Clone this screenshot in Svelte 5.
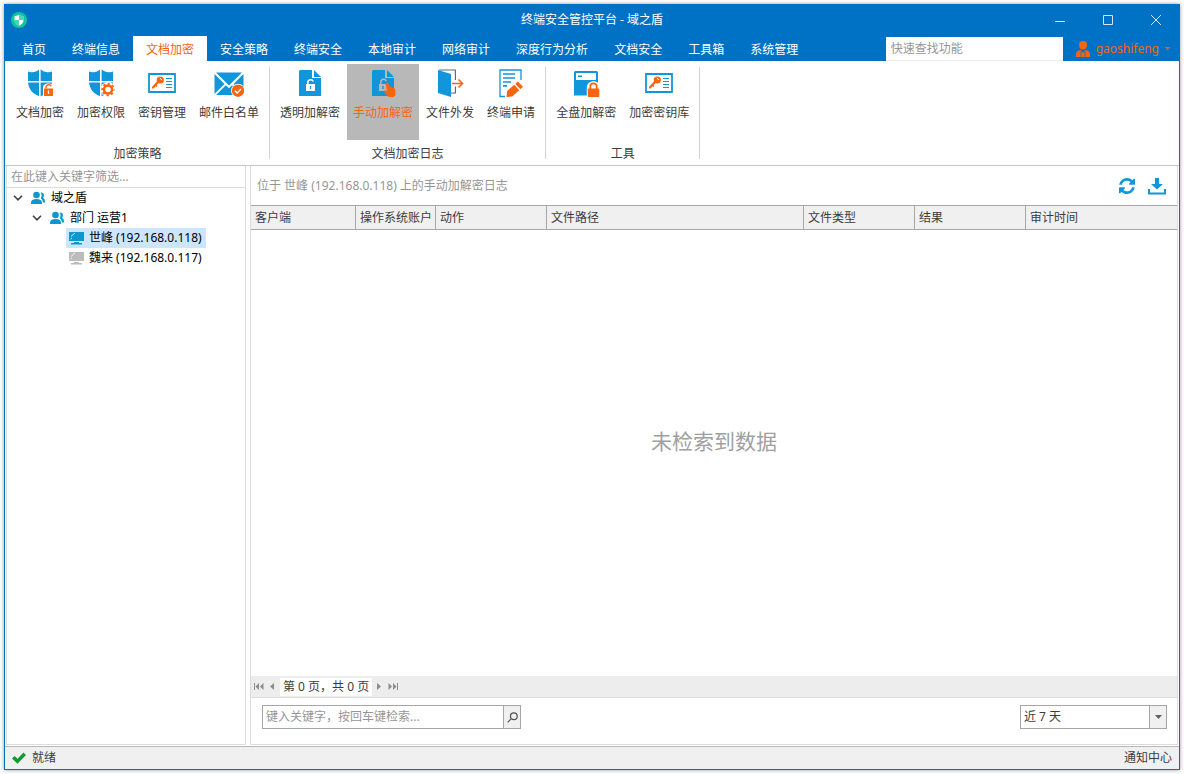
<script lang="ts">
	type RibbonItem = { icon: string; label: string };
	type RibbonGroup = { label: string; items: RibbonItem[] };
	type TreeNode = { label: string; level: number; kind: 'folder' | 'online' | 'offline' };

	const TABS = [
		'首页',
		'终端信息',
		'文档加密',
		'安全策略',
		'终端安全',
		'本地审计',
		'网络审计',
		'深度行为分析',
		'文档安全',
		'工具箱',
		'系统管理'
	];

	const GROUPS: RibbonGroup[] = [
		{
			label: '加密策略',
			items: [
				{ icon: 'shield-lock', label: '文档加密' },
				{ icon: 'shield-gear', label: '加密权限' },
				{ icon: 'key-card', label: '密钥管理' },
				{ icon: 'mail', label: '邮件白名单' }
			]
		},
		{
			label: '文档加密日志',
			items: [
				{ icon: 'doc-lock', label: '透明加解密' },
				{ icon: 'doc-hand', label: '手动加解密' },
				{ icon: 'door', label: '文件外发' },
				{ icon: 'doc-edit', label: '终端申请' }
			]
		},
		{
			label: '工具',
			items: [
				{ icon: 'disk', label: '全盘加解密' },
				{ icon: 'key-card', label: '加密密钥库' }
			]
		}
	];

	const NODES: TreeNode[] = [
		{ label: '域之盾', level: 0, kind: 'folder' },
		{ label: '部门 运营1', level: 1, kind: 'folder' },
		{ label: '世峰 (192.168.0.118)', level: 2, kind: 'online' },
		{ label: '魏来 (192.168.0.117)', level: 2, kind: 'offline' }
	];

	const COLUMNS = [
		{ label: '客户端', cls: 'w-client' },
		{ label: '操作系统账户', cls: 'w-account' },
		{ label: '动作', cls: 'w-mid' },
		{ label: '文件路径', cls: '' },
		{ label: '文件类型', cls: 'w-mid' },
		{ label: '结果', cls: 'w-mid' },
		{ label: '审计时间', cls: 'w-time' }
	];

	const RANGES = ['近 7 天', '近 30 天', '近 90 天'];

	let activeTab = $state('文档加密');
	let activeItem = $state('手动加解密');
	let activeNode = $state('世峰 (192.168.0.118)');
	let quickFind = $state('');
	let treeFilter = $state('');
	let keyword = $state('');
	let range = $state(RANGES[0]);
</script>

{#snippet shield()}
	<path fill="#1296db" d="M4 4.5c1.6.8 3.6 1 5.600.6C12 4.600 14 3.600 16 2c2 1.600 4 2.600 6.400 3.100 2 .4 4 .2 5.600-.6V14c0 8-5 13.200-12 15.500C9 27.200 4 22 4 14z" />
	<path stroke="#fff" stroke-width="1.6" d="M15.800 1v29M3 14.800h26" />
{/snippet}

{#snippet docBody()}
	<path fill="#1296db" d="M5 4.500A1.500 1.500 0 0 1 6.500 3H18v8h9v18H5z" />
	<path fill="#1296db" d="M20 3l7 7h-7z" />
{/snippet}

{#snippet ribbonIcon(name: string)}
	<svg class="ribbon-icon" viewBox="0 0 32 32" fill="none" aria-hidden="true">
		{#if name === 'shield-lock'}
			{@render shield()}
			<path fill="#fff" d="M19 20.500c0-5.500 10.500-5.500 10.500 0V30H19z" />
			<path stroke="#f9640f" stroke-width="1.500" d="M22 21.500v-1.300a2.800 2.800 0 0 1 5.200-1" />
			<path fill="#f9640f" d="M20 21.500h9V29h-9z" />
			<path stroke="#fff" stroke-width="1.300" d="M24.500 23.500v3.500" />
		{:else if name === 'shield-gear'}
			{@render shield()}
			<circle cx="23" cy="22.500" r="7.500" fill="#fff" />
			<circle cx="23" cy="22.500" r="4" stroke="#f9640f" stroke-width="2.400" />
			<circle cx="23" cy="22.500" r="5.700" stroke="#f9640f" stroke-width="2" stroke-dasharray="2.200 2.280" stroke-dashoffset="1.100" />
		{:else if name === 'key-card'}
			<path stroke="#1296db" stroke-width="1.800" d="M3 7h26v18H3z" />
			<path stroke="#f9640f" stroke-width="2.200" stroke-linecap="round" d="M12 15l-5 5.500" />
			<path stroke="#f9640f" stroke-width="1.500" d="M9.500 18l1.300 1.500" />
			<circle cx="14.300" cy="13" r="3.600" fill="#f9640f" />
			<path stroke="#fff" stroke-width="1" d="M13.800 11l2.200 2" />
			<path stroke="#1296db" stroke-width="1.100" d="M20 11.500h6M20 14.500h6M20 17.500h6M20 20.500h6" />
		{:else if name === 'mail'}
			<path fill="#1296db" d="M3 5.500h26L16 18.500z" />
			<path fill="#1296db" d="M1.500 7l10 10-10 10zM30.500 7l-10 10 10 10zM3 28l9.800-9.800 3.200 3 3.200-3L29 28z" />
			<circle cx="25" cy="23.700" r="7" fill="#fff" />
			<circle cx="25" cy="23.700" r="6.200" fill="#f9640f" />
			<path stroke="#fff" stroke-width="1.400" d="M22 23.700l2.200 2.200 3.800-3.800" />
		{:else if name === 'doc-lock'}
			{@render docBody()}
			<path stroke="#fff" stroke-width="1.500" d="M13.800 17v-1.500a2.800 2.800 0 0 1 5.400-1" />
			<path fill="#fff" d="M12 17h9v7h-9z" />
			<path stroke="#1296db" stroke-width="1.200" d="M16.500 19v3" />
		{:else if name === 'doc-hand'}
			{@render docBody()}
			<path stroke="#b8b8b8" stroke-width="1.500" d="M13.800 17v-2a2.800 2.800 0 0 1 5.400-1" />
			<path fill="#b8b8b8" d="M12 17h9v7h-9z" />
			<path stroke="#1296db" stroke-width="1.400" d="M16 19v3" />
			<path fill="#f9640f" d="M18.500 16.200c.8-1 2.400-.7 2.900.4l1.200 3c.8-.3 1.600 0 2 .7.8-.2 1.500.2 1.800.9 1.200-.1 1.900.6 1.900 1.900v4c0 1.800-1 2.900-2.500 2.900h-2.600c-1.400 0-2.300-.5-3-1.500L17.300 25c-.6-1.100.6-2.200 1.800-1.500l.9.500z" />
		{:else if name === 'door'}
			<path stroke="#5c6b80" stroke-width="1.200" d="M5 3h16.400v10M21.400 19.500V26H17" />
			<path fill="#1296db" d="M4 3l13 4v23L4 26z" />
			<path stroke="#f9640f" stroke-width="1.600" d="M18 16.500h10M24.500 12.500l4 4-4 4" />
		{:else if name === 'doc-edit'}
			<path stroke="#1296db" stroke-width="1.300" d="M26 13V3H5v26.500h5" />
			<path stroke="#1296db" stroke-width="1.700" d="M8 7h12M8 11h12M8 15h8M8 18.800h4" />
			<path fill="#f9640f" d="M11.500 30l.7-6 7-6.300 5 5.500-7 6.300zM20.300 16.700l2.500-2.200 5.200 5.200-2.700 2.500z" />
		{:else if name === 'disk'}
			<path fill="#1296db" d="M4 5.500A1.500 1.500 0 0 1 5.500 4h21A1.500 1.500 0 0 1 28 5.500v23H4z" />
			<path fill="#fff" d="M6 6h20v7H6z" />
			<path fill="#1296db" d="M8 8.500h4V10H8z" />
			<path fill="#fff" d="M16.800 20.500c0-8.500 13.400-8.500 13.400 0V31H16.800z" />
			<path stroke="#f9640f" stroke-width="1.800" d="M20.300 22v-2.500a3.200 3.200 0 0 1 6.400 0V22" />
			<rect x="17.800" y="21.500" width="11.500" height="8.500" rx="1" fill="#f9640f" />
		{/if}
	</svg>
{/snippet}

<div class="desktop">
	<div class="window">
		<header>
			<div class="titlebar">
				<svg class="logo" viewBox="0 0 16 16" aria-hidden="true">
					<circle cx="8" cy="8" r="8" fill="#0fc79c" />
					<path fill="#fff" d="M8 2.800c1.400.9 2.900 1.300 4.500 1.400V8c0 2.700-1.700 4.500-4.500 5.700C5.200 12.500 3.500 10.700 3.500 8V4.200C5.100 4.100 6.600 3.700 8 2.800z" />
					<path fill="#0fc79c" d="M12.500 4v4H8V3zM3.500 8H8v5.700C5 12.700 3.500 11 3.500 8z" opacity=".75" />
				</svg>
				<h1>终端安全管控平台 - 域之盾</h1>
				<div class="window-buttons">
					<button type="button" aria-label="最小化">
						<svg viewBox="0 0 10 10"><path d="M0 6.500h10" /></svg>
					</button>
					<button type="button" aria-label="最大化">
						<svg viewBox="0 0 10 10"><path d="M.5.5h9v9h-9z" /></svg>
					</button>
					<button type="button" aria-label="关闭">
						<svg viewBox="0 0 10 10"><path d="M0 0l10 10M10 0L0 10" /></svg>
					</button>
				</div>
			</div>
			<div class="tabbar">
				<nav>
					{#each TABS as tab (tab)}
						<button type="button" class="tab" class:active={tab === activeTab} onclick={() => (activeTab = tab)}>
							{tab}
						</button>
					{/each}
				</nav>
				<input class="quick-find" type="text" placeholder="快速查找功能" aria-label="快速查找功能" bind:value={quickFind} />
				<button type="button" class="user">
					<svg class="user-icon" viewBox="0 0 14 16" aria-hidden="true">
						<ellipse cx="7" cy="4.200" rx="4" ry="4.200" fill="#f9640f" />
						<path fill="#f9640f" d="M0 16v-3c0-2.500 2-3.500 4.500-4L7 12l2.500-3c2.500.5 4.500 1.500 4.500 4v3z" />
						<path stroke="#0072c6" stroke-width=".8" fill="none" d="M5 10v6M9 10v6" />
					</svg>
					gaoshifeng
					<svg class="user-caret" viewBox="0 0 5 3" aria-hidden="true"><path d="M0 0h5L2.500 3z" fill="#f9640f" /></svg>
				</button>
			</div>
		</header>

		<div class="ribbon">
			{#each GROUPS as group (group.label)}
				<section class="ribbon-group">
					<div class="ribbon-items">
						{#each group.items as item (item.label)}
							<button
								type="button"
								class="ribbon-item"
								class:active={item.label === activeItem}
								onclick={() => (activeItem = item.label)}
							>
								{@render ribbonIcon(item.icon)}
								<span>{item.label}</span>
							</button>
						{/each}
					</div>
					<div class="ribbon-label">{group.label}</div>
				</section>
				<div class="separator"></div>
			{/each}
		</div>

		<main>
			<aside>
				<input class="tree-filter" type="text" placeholder="在此键入关键字筛选..." aria-label="筛选" bind:value={treeFilter} />
				<ul>
					{#each NODES as node (node.label)}
						<li style="--level: {node.level}">
							<span class="chevron">
								{#if node.kind === 'folder'}
									<svg viewBox="0 0 10 6" aria-hidden="true"><path d="M1 .8l4 4 4-4" /></svg>
								{/if}
							</span>
							<button
								type="button"
								class="node"
								class:selected={node.label === activeNode}
								onclick={() => (activeNode = node.label)}
							>
								<svg class="node-icon {node.kind}" viewBox="0 0 16 16" aria-hidden="true">
									{#if node.kind === 'folder'}
										<path d="M10.500 2.500c2-.5 3.500.8 3.500 2.700 0 1-.4 1.900-1 2.500 1.500.8 2 1.800 2 4.800h-2c-.2-2-1-3.500-2.300-4.300 1.300-1.800 1.200-4-.2-5.700z" />
										<circle cx="6.500" cy="5" r="3.300" />
										<path d="M1 14v-1.500C1 10.200 3 9 6.500 9s5.500 1.200 5.500 3.500V14z" />
									{:else}
										<path d="M1 2h15v9H1zM6 12h5v1h3v1.500H3V13h3z" />
										<path d="M3 6.500L7 3M2.500 9.300L4 8" stroke="#fff" stroke-width=".8" />
									{/if}
								</svg>
								{node.label}
							</button>
						</li>
					{/each}
				</ul>
			</aside>

			<section class="log">
				<div class="log-head">
					<h2>位于 世峰 (192.168.0.118) 上的手动加解密日志</h2>
					<button type="button" class="tool" aria-label="刷新">
						<svg class="tool-refresh" viewBox="0 0 1536 1536">
							<path d="M1511 928q0 5-1 7-64 268-268 434.500t-478 166.500q-146 0-282.500-55t-243.500-157l-129 129q-19 19-45 19t-45-19-19-45v-448q0-26 19-45t45-19h448q26 0 45 19t19 45-19 45l-137 137q71 66 161 102t187 36q134 0 250-65t186-179q11-17 53-117 8-23 30-23h192q13 0 22.500 9.500t9.500 22.500zm25-800v448q0 26-19 45t-45 19h-448q-26 0-45-19t-19-45 19-45l138-138q-148-137-349-137-134 0-250 65t-186 179q-11 17-53 117-8 23-30 23h-199q-13 0-22.500-9.500t-9.500-22.500v-7q65-268 270-434.500t480-166.500q146 0 284 55.500t245 156.500l130-129q19-19 45-19t45 19 19 45z" />
						</svg>
					</button>
					<button type="button" class="tool" aria-label="导出">
						<svg class="tool-download" viewBox="0 0 18 18">
							<path d="M7 1h4v6h4l-6 5.500L3 7h4zM0 12h2v3.500h14V12h2v5.500H0z" />
						</svg>
					</button>
				</div>

				<table>
					<thead>
						<tr>
							{#each COLUMNS as column (column.label)}
								<th class={column.cls}>{column.label}</th>
							{/each}
						</tr>
					</thead>
				</table>
				<p class="empty">未检索到数据</p>

				<div class="pager">
					<button type="button" aria-label="第一页">
						<svg viewBox="0 0 10 7"><path d="M0 0h1v7H0zM5 0v7L1.500 3.500zM9.500 0v7L6 3.500z" /></svg>
					</button>
					<button type="button" aria-label="上一页">
						<svg viewBox="0 0 10 7"><path d="M6 0v7L2 3.500z" /></svg>
					</button>
					<span class="page-info">第 0 页，共 0 页</span>
					<button type="button" aria-label="下一页">
						<svg viewBox="0 0 10 7"><path d="M3 0v7l4-3.500z" /></svg>
					</button>
					<button type="button" aria-label="最后一页">
						<svg viewBox="0 0 10 7"><path d="M9 0h1v7H9zM5 0v7l3.500-3.500zM.5 0v7L4 3.500z" /></svg>
					</button>
				</div>

				<div class="filters">
					<div class="search">
						<input type="text" placeholder="键入关键字，按回车键检索..." aria-label="关键字" bind:value={keyword} />
						<button type="button" aria-label="检索">
							<svg viewBox="0 0 11 11" aria-hidden="true">
								<circle cx="6.800" cy="4.200" r="3.400" />
								<path d="M4.300 6.700L.7 10.300" />
							</svg>
						</button>
					</div>
					<div class="range">
						<select aria-label="时间范围" bind:value={range}>
							{#each RANGES as option (option)}
								<option value={option}>{option}</option>
							{/each}
						</select>
						<span class="range-arrow">
							<svg viewBox="0 0 7 4" aria-hidden="true"><path d="M0 0h7L3.500 4z" /></svg>
						</span>
					</div>
				</div>
			</section>
		</main>

		<footer>
			<svg class="ready" viewBox="0 0 14 12" aria-hidden="true">
				<path d="M0 6.500l2.500-2.500L5.500 6.800 11.500 0.500 14 3 5.500 11.800z" />
			</svg>
			<span class="status">就绪</span>
			<button type="button">通知中心</button>
		</footer>
	</div>
</div>

<style>
	:global(body) {
		margin: 0;
		background: #fff;
	}

	.desktop {
		--blue: #0072c6;
		--icon-blue: #1296db;
		--orange: #f9640f;
		--line: #dcdcdc;
		--line-dark: #a6a6a6;
		--panel: #f0f0f0;

		display: flex;
		box-sizing: border-box;
		min-height: 100vh;
		padding: 4px;
		color: #3c3c3c;
		font-family: 'Noto Sans', 'Noto Sans CJK SC', sans-serif;
		font-size: 12px;
		line-height: 18px;
	}

	.desktop :is(button, input, select) {
		box-sizing: border-box;
		min-width: 0;
		margin: 0;
		padding: 0;
		border: 0;
		border-radius: 0;
		outline: 0;
		background: none;
		color: inherit;
		font: inherit;
	}

	input::placeholder {
		color: #969696;
		opacity: 1;
	}

	svg {
		display: block;
		flex-shrink: 0;
	}

	h1,
	h2,
	ul,
	p {
		margin: 0;
		padding: 0;
		font-size: 12px;
		font-weight: 400;
	}

	.window {
		display: flex;
		flex: 1;
		flex-direction: column;
		min-width: 0;
		padding-bottom: 1px;
		background: var(--blue);
		box-shadow: 0 0 4px rgba(0, 0, 0, 0.4);
	}

	.titlebar {
		display: grid;
		grid-template-columns: 1fr auto 1fr;
		align-items: center;
		height: 32px;
		color: #fff;
	}

	.logo {
		width: 16px;
		height: 16px;
		margin-left: 7px;
	}

	.window-buttons {
		display: flex;
		justify-content: flex-end;
	}

	.window-buttons button {
		display: grid;
		place-items: center;
		width: 48px;
		height: 32px;
	}

	.window-buttons svg {
		width: 10px;
		height: 10px;
		fill: none;
		stroke: #d6e6f4;
	}

	.tabbar {
		display: flex;
		height: 25px;
		padding: 0 10px 0 5px;
	}

	nav {
		display: flex;
		flex: 1;
	}

	.desktop .tab {
		padding: 2px 13px 0;
		color: #fff;
		white-space: nowrap;
	}

	.desktop .tab.active {
		background: #fff;
		color: var(--orange);
	}

	.desktop .quick-find {
		width: 177px;
		margin-top: 1px;
		padding: 0 5px;
		border-bottom: 1px solid #eee;
		background: #fff;
	}

	.desktop .user {
		display: flex;
		align-items: center;
		gap: 6px;
		margin-left: 13px;
		color: var(--orange);
	}

	.user-icon {
		width: 14px;
		height: 16px;
	}

	.user-caret {
		width: 5px;
		height: 3px;
	}

	.ribbon {
		display: flex;
		height: 104px;
		margin: 0 1px;
		padding-left: 1px;
		border-bottom: 1px solid #c6c6c6;
		background: #fff;
	}

	.ribbon-group {
		display: flex;
		flex-direction: column;
		padding: 3px 4px 0;
	}

	.separator {
		width: 1px;
		margin: 6px 0;
		background: #d2d2d2;
	}

	.ribbon-items {
		display: flex;
		gap: 1px;
	}

	.desktop .ribbon-item {
		display: flex;
		flex-direction: column;
		align-items: center;
		gap: 5px;
		height: 76px;
		padding: 3px 6px 0;
		white-space: nowrap;
	}

	.desktop .ribbon-item.active {
		background: #b8b8b8;
		color: var(--orange);
	}

	.ribbon-icon {
		width: 32px;
		height: 32px;
	}

	.ribbon-label {
		margin-top: 5px;
		text-align: center;
	}

	main {
		display: flex;
		flex: 1;
		gap: 4px;
		margin: 0 1px;
		padding: 0 1px 1px;
		background: #fff;
	}

	aside {
		display: flex;
		flex-direction: column;
		box-sizing: border-box;
		width: 240px;
		border: 1px solid var(--line);
		border-top: 0;
		color: #000;
	}

	.desktop .tree-filter {
		height: 22px;
		padding: 0 4px;
		border-bottom: 1px solid var(--line);
	}

	ul {
		list-style: none;
	}

	li {
		display: flex;
		gap: 2px;
		height: 20px;
		padding-left: calc(3px + 19px * var(--level));
	}

	.chevron {
		display: grid;
		place-items: center;
		width: 16px;
	}

	.chevron svg {
		width: 10px;
		height: 6px;
		fill: none;
		stroke: #404040;
		stroke-width: 1.6;
	}

	.desktop .node {
		display: flex;
		align-items: center;
		gap: 5px;
		padding: 0 4px 0 2px;
		white-space: nowrap;
	}

	.desktop .node.selected {
		background: #cce6ff;
	}

	.node-icon {
		width: 16px;
		height: 16px;
		fill: #0a98cf;
	}

	.node-icon.offline {
		fill: #bcbcbc;
	}

	.log {
		display: flex;
		flex: 1;
		flex-direction: column;
		min-width: 0;
		border: 1px solid var(--line);
		border-top: 0;
	}

	.log-head {
		display: flex;
		align-items: center;
		gap: 10px;
		height: 39px;
		padding: 0 10px 0 6px;
	}

	h2 {
		flex: 1;
		color: #969696;
	}

	.tool {
		display: grid;
		place-items: center;
		width: 20px;
		height: 20px;
	}

	.tool svg {
		fill: var(--icon-blue);
	}

	.tool-refresh {
		width: 16px;
		height: 16px;
	}

	.tool-download {
		width: 18px;
		height: 18px;
	}

	table {
		width: 100%;
		border-collapse: separate;
		border-spacing: 0;
		table-layout: fixed;
	}

	th {
		box-sizing: border-box;
		height: 25px;
		padding: 0 4px;
		border: 1px solid var(--line-dark);
		border-left: 0;
		background: var(--panel);
		font-weight: 400;
		text-align: left;
		white-space: nowrap;
	}

	th:last-child {
		border-right: 0;
	}

	.w-client {
		width: 105px;
	}

	.w-account {
		width: 80px;
		padding-right: 0;
	}

	.w-mid {
		width: 111px;
	}

	.w-time {
		width: 151px;
	}

	.empty {
		display: grid;
		flex: 1;
		place-items: center;
		padding-bottom: 24px;
		color: #a0a0a0;
		font-size: 21px;
		line-height: 32px;
	}

	.pager {
		display: flex;
		align-items: center;
		height: 21px;
		padding-left: 1px;
		border-bottom: 1px solid var(--line);
		background: #ededed;
	}

	.pager button {
		display: grid;
		place-items: center;
		width: 14px;
		height: 20px;
	}

	.pager svg {
		width: 10px;
		height: 7px;
		fill: #8c8c8c;
	}

	.page-info {
		padding: 0 3px;
		background: #fff;
	}

	.filters {
		display: flex;
		justify-content: space-between;
		padding: 7px 10px 15px 11px;
	}

	.search,
	.range {
		display: flex;
		box-sizing: border-box;
		height: 24px;
		border: 1px solid var(--line-dark);
	}

	.search {
		width: 259px;
	}

	.desktop .search input {
		flex: 1;
		padding: 0 3px;
	}

	.desktop .search button,
	.range-arrow {
		display: grid;
		place-items: center;
		box-sizing: border-box;
		width: 17px;
		border-left: 1px solid var(--line-dark);
		background: var(--panel);
	}

	.search svg {
		width: 11px;
		height: 11px;
		fill: none;
		stroke: #505050;
		stroke-width: 1.2;
	}

	.range {
		position: relative;
		width: 147px;
	}

	.desktop .range select {
		flex: 1;
		padding: 0 3px;
		appearance: none;
	}

	.range-arrow {
		position: absolute;
		top: 0;
		right: 0;
		bottom: 0;
		pointer-events: none;
	}

	.range-arrow svg {
		width: 7px;
		height: 4px;
		fill: #606060;
	}

	footer {
		display: flex;
		align-items: center;
		gap: 6px;
		height: 22px;
		margin: 0 1px;
		padding: 0 7px;
		border-top: 1px solid #b9b9b9;
		background: var(--panel);
	}

	.ready {
		width: 14px;
		height: 12px;
		fill: #0f9d32;
	}

	.status {
		flex: 1;
	}
</style>
